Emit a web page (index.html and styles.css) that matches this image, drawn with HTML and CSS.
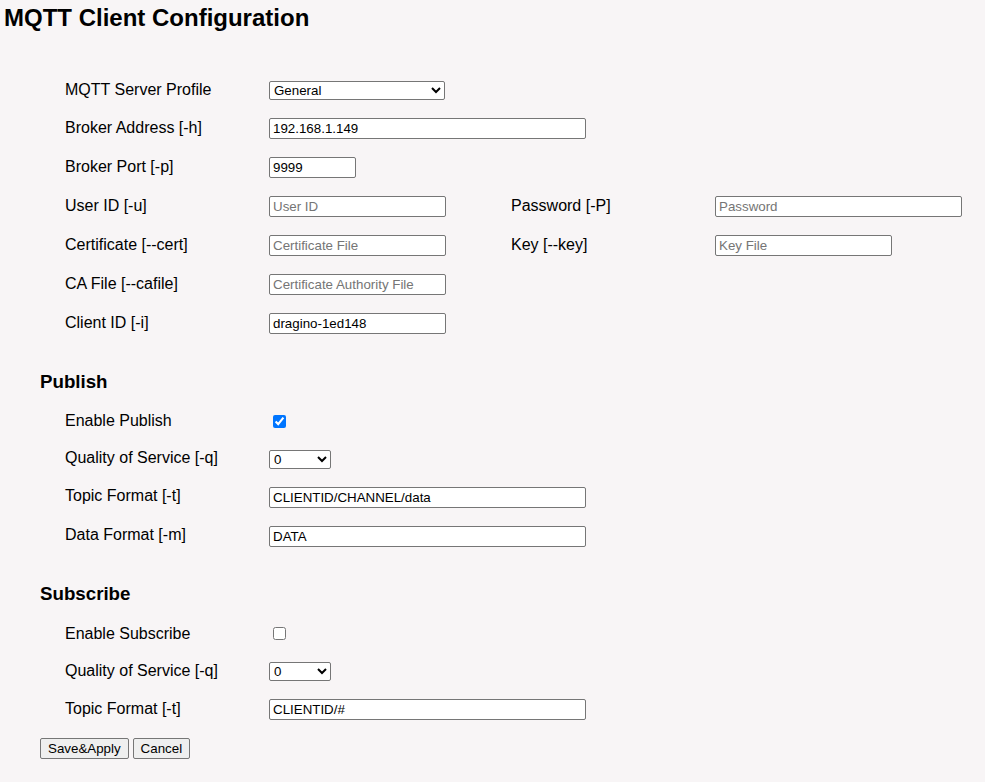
FILE: index.html
```html
<!DOCTYPE html>
<html lang="en">

<head>
    <meta charset="UTF-8">
    <title>MQTT Client Configuration</title>
    <link rel="stylesheet" href="styles.css">
</head>

<body>

    <h2 class="page-title">MQTT Client Configuration</h2>

    <div class="content">
        <div class="row">
            <label class="label">MQTT Server Profile</label>
            <div class="field">
                <select class="select select-profile">
                    <option selected>General</option>
                    <option>AWS-IoT</option>
                    <option>Azure</option>
                    <option>ThingSpeak</option>
                </select>
            </div>
        </div>
        <div class="row">
            <label class="label">Broker Address [-h]</label>
            <div class="field"><input class="input input-wide" type="text" value="192.168.1.149"></div>
        </div>
        <div class="row">
            <label class="label">Broker Port [-p]</label>
            <div class="field"><input class="input input-port" type="text" value="9999"></div>
        </div>
        <div class="row">
            <label class="label">User ID [-u]</label>
            <div class="field"><input class="input input-mid" type="text" placeholder="User ID"></div>
            <label class="label">Password [-P]</label>
            <div class="field"><input class="input input-pass" type="text" placeholder="Password"></div>
        </div>
        <div class="row">
            <label class="label">Certificate [--cert]</label>
            <div class="field"><input class="input input-mid" type="text" placeholder="Certificate File"></div>
            <label class="label">Key [--key]</label>
            <div class="field"><input class="input input-mid" type="text" placeholder="Key File"></div>
        </div>
        <div class="row">
            <label class="label">CA File [--cafile]</label>
            <div class="field"><input class="input input-mid" type="text" placeholder="Certificate Authority File"></div>
        </div>
        <div class="row">
            <label class="label">Client ID [-i]</label>
            <div class="field"><input class="input input-mid" type="text" value="dragino-1ed148"></div>
        </div>

        <h3 class="section-title">Publish</h3>
        <div class="row">
            <label class="label">Enable Publish</label>
            <div class="field"><input class="check" type="checkbox" checked></div>
        </div>
        <div class="row">
            <label class="label">Quality of Service [-q]</label>
            <div class="field">
                <select class="select select-qos">
                    <option selected>0</option>
                    <option>1</option>
                    <option>2</option>
                </select>
            </div>
        </div>
        <div class="row">
            <label class="label">Topic Format [-t]</label>
            <div class="field"><input class="input input-wide" type="text" value="CLIENTID/CHANNEL/data"></div>
        </div>
        <div class="row">
            <label class="label">Data Format [-m]</label>
            <div class="field"><input class="input input-wide" type="text" value="DATA"></div>
        </div>

        <h3 class="section-title">Subscribe</h3>
        <div class="row">
            <label class="label">Enable Subscribe</label>
            <div class="field"><input class="check" type="checkbox"></div>
        </div>
        <div class="row">
            <label class="label">Quality of Service [-q]</label>
            <div class="field">
                <select class="select select-qos">
                    <option selected>0</option>
                    <option>1</option>
                    <option>2</option>
                </select>
            </div>
        </div>
        <div class="row">
            <label class="label">Topic Format [-t]</label>
            <div class="field"><input class="input input-wide" type="text" value="CLIENTID/#"></div>
        </div>

        <div class="actions">
            <button class="btn" type="button">Save&amp;Apply</button>
            <button class="btn" type="button">Cancel</button>
        </div>
    </div>

</body>

</html>
```

FILE: styles.css
```css
body {
    margin: 0;
    padding: 4px 4px;
    background: #f8f5f6;
    color: #000;
    font-family: "Liberation Sans", Arial, sans-serif;
}

.page-title {
    font-size: 24px;
    font-weight: bold;
    line-height: normal;
    margin: 0 0 40px;
}

.content {
    padding-left: 36px;
}

.section-title {
    font-size: 18.72px;
    font-weight: bold;
    line-height: normal;
    margin: 27.5px 0 11px;
}

.row {
    display: flex;
    align-items: center;
    padding: 9px 0 9px 25px;
}

.label {
    width: 204px;
    flex-shrink: 0;
    font-size: 16px;
    line-height: 16px;
    padding-bottom: 2px;
}

.field {
    width: 242px;
    flex-shrink: 0;
    display: flex;
    align-items: center;
}

.input {
    box-sizing: border-box;
    flex-shrink: 0;
    height: 21px;
    padding: 1px 3px;
    border: 1px solid #767676;
    border-radius: 2px;
    background: #fff;
    color: #000;
    font-family: "Liberation Sans", Arial, sans-serif;
    font-size: 13.333px;
}

.input::placeholder {
    color: #757575;
}

.input-wide {
    width: 317px;
}

.input-port {
    width: 87px;
}

.input-mid {
    width: 177px;
}

.input-pass {
    width: 247px;
}

.select {
    box-sizing: border-box;
    flex-shrink: 0;
    height: 19px;
    font-family: "Liberation Sans", Arial, sans-serif;
    font-size: 13.333px;
    color: #000;
    background: #fff;
    border: 1px solid #767676;
    border-radius: 2px;
}

.select-profile {
    width: 176px;
}

.select-qos {
    width: 62px;
}

.check {
    flex-shrink: 0;
    width: 13px;
    height: 13px;
    margin: 2px 3px 4px 4px;
}

.actions {
    display: flex;
    gap: 4px;
    margin-top: 9px;
}

.btn {
    box-sizing: border-box;
    height: 21px;
    padding: 1px 7px;
    font-family: "Liberation Sans", Arial, sans-serif;
    font-size: 13.333px;
    color: #000;
    background: #efefef;
    border: 1px solid #767676;
    border-radius: 2px;
}
```
